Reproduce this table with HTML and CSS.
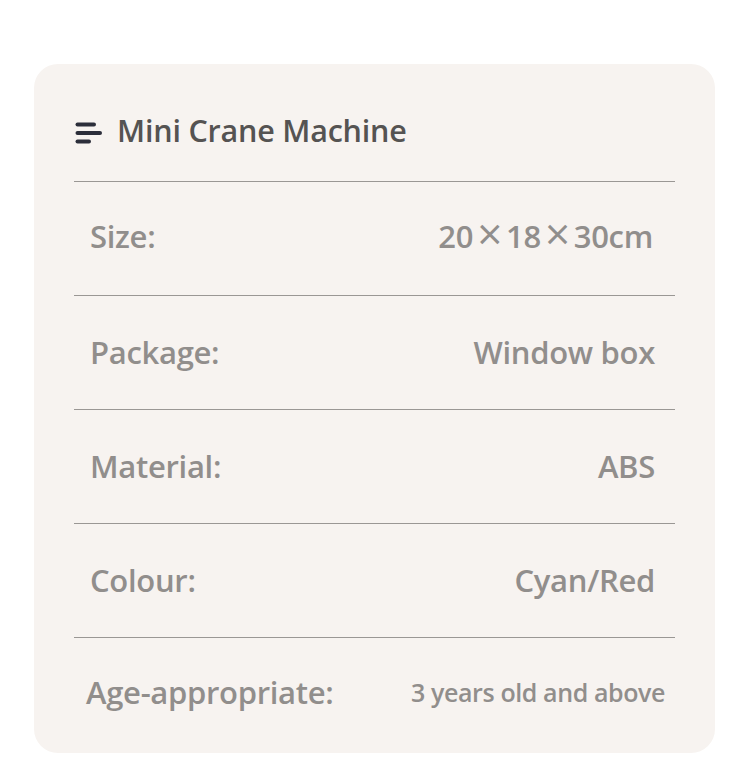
FILE: index.html
```html
<!DOCTYPE html>
<html>
<head>
<meta charset="utf-8">
<link rel="stylesheet" href="styles.css">
</head>
<body>
<div class="card">
  <div class="header">
    <svg class="icon" width="28" height="22" viewBox="0 0 28 22">
      <g stroke="#2c2e3a" stroke-width="4" stroke-linecap="round" fill="none">
        <line x1="2.5" y1="2.5" x2="19" y2="2.5"/>
        <line x1="2.5" y1="11" x2="25" y2="11"/>
        <line x1="2.5" y1="19.5" x2="14" y2="19.5"/>
      </g>
    </svg>
    <h1 class="title">Mini Crane Machine</h1>
  </div>
  <div class="row first"><span class="label">Size:</span><span class="value">20<span class="x">×</span>18<span class="x">×</span>30cm</span></div>
  <div class="row"><span class="label">Package:</span><span class="value">Window box</span></div>
  <div class="row"><span class="label">Material:</span><span class="value">ABS</span></div>
  <div class="row"><span class="label">Colour:</span><span class="value">Cyan/Red</span></div>
  <div class="row last"><span class="label">Age-appropriate:</span><span class="value small">3 years old and above</span></div>
</div>
</body>
</html>
```
FILE: styles.css
```css
html, body {
  margin: 0;
  padding: 0;
  background: #ffffff;
}
body {
  font-family: "Open Sans", "Noto Sans", sans-serif;
  padding: 64px 35px 0 34px;
}
.card {
  background: #f7f3f0;
  border-radius: 24px;
  padding: 0 40px;
  height: 689px;
  box-sizing: border-box;
}
.header {
  display: flex;
  gap: 14px;
  padding: 47px 0 0 1px;
  height: 117px;
  box-sizing: border-box;
  align-items: flex-start;
}
.icon {
  margin-top: 11px;
}
.title {
  margin: 0;
  font-size: 30.5px;
  line-height: 38px;
  font-weight: 600;
  color: #555352;
  letter-spacing: -0.2px;
}
.row {
  display: flex;
  justify-content: space-between;
  align-items: center;
  height: 114px;
  border-top: 1px solid #9a9794;
  box-sizing: border-box;
  padding: 0 20px 2px 16px;
}
.row.first {
  padding-bottom: 6px;
  padding-right: 22px;
}
.row.last {
  height: 116px;
  padding: 0 10px 8px 12px;
}
.label, .value {
  font-size: 31px;
  font-weight: 600;
  color: #918e8c;
  letter-spacing: -0.3px;
}
.x {
  font-weight: 400;
  font-size: 44px;
  margin: 0 4px;
  line-height: 0;
  vertical-align: -2px;
}
.value.small {
  font-size: 25px;
  letter-spacing: -0.4px;
}
```
